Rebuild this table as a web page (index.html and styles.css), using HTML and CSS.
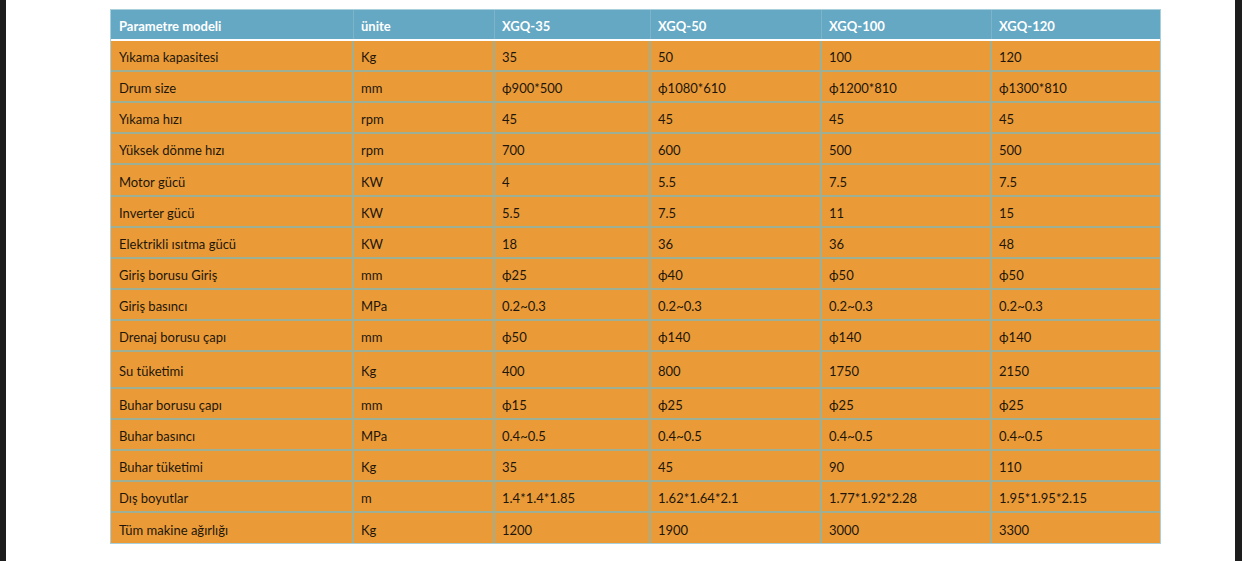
FILE: index.html
```html
<!DOCTYPE html>
<html lang="tr">
<head>
<meta charset="utf-8">
<title>Parametre modeli</title>
<link rel="stylesheet" href="styles.css">
</head>
<body>
<div class="page">
  <div class="tbl">
    <div class="row head"><div class="c">Parametre modeli</div><div class="c">ünite</div><div class="c">XGQ-35</div><div class="c">XGQ-50</div><div class="c">XGQ-100</div><div class="c">XGQ-120</div></div>
    <div class="row"><div class="c">Yıkama kapasitesi</div><div class="c">Kg</div><div class="c">35</div><div class="c">50</div><div class="c">100</div><div class="c">120</div></div>
    <div class="row"><div class="c">Drum size</div><div class="c">mm</div><div class="c">ϕ900*500</div><div class="c">ϕ1080*610</div><div class="c">ϕ1200*810</div><div class="c">ϕ1300*810</div></div>
    <div class="row"><div class="c">Yıkama hızı</div><div class="c">rpm</div><div class="c">45</div><div class="c">45</div><div class="c">45</div><div class="c">45</div></div>
    <div class="row"><div class="c">Yüksek dönme hızı</div><div class="c">rpm</div><div class="c">700</div><div class="c">600</div><div class="c">500</div><div class="c">500</div></div>
    <div class="row wide"><div class="c">Motor gücü</div><div class="c">KW</div><div class="c">4</div><div class="c">5.5</div><div class="c">7.5</div><div class="c">7.5</div></div>
    <div class="row"><div class="c">Inverter gücü</div><div class="c">KW</div><div class="c">5.5</div><div class="c">7.5</div><div class="c">11</div><div class="c">15</div></div>
    <div class="row"><div class="c">Elektrikli ısıtma gücü</div><div class="c">KW</div><div class="c">18</div><div class="c">36</div><div class="c">36</div><div class="c">48</div></div>
    <div class="row"><div class="c">Giriş borusu Giriş</div><div class="c">mm</div><div class="c">ϕ25</div><div class="c">ϕ40</div><div class="c">ϕ50</div><div class="c">ϕ50</div></div>
    <div class="row"><div class="c">Giriş basıncı</div><div class="c">MPa</div><div class="c">0.2~0.3</div><div class="c">0.2~0.3</div><div class="c">0.2~0.3</div><div class="c">0.2~0.3</div></div>
    <div class="row"><div class="c">Drenaj borusu çapı</div><div class="c">mm</div><div class="c">ϕ50</div><div class="c">ϕ140</div><div class="c">ϕ140</div><div class="c">ϕ140</div></div>
    <div class="row tall"><div class="c">Su tüketimi</div><div class="c">Kg</div><div class="c">400</div><div class="c">800</div><div class="c">1750</div><div class="c">2150</div></div>
    <div class="row"><div class="c">Buhar borusu çapı</div><div class="c">mm</div><div class="c">ϕ15</div><div class="c">ϕ25</div><div class="c">ϕ25</div><div class="c">ϕ25</div></div>
    <div class="row"><div class="c">Buhar basıncı</div><div class="c">MPa</div><div class="c">0.4~0.5</div><div class="c">0.4~0.5</div><div class="c">0.4~0.5</div><div class="c">0.4~0.5</div></div>
    <div class="row"><div class="c">Buhar tüketimi</div><div class="c">Kg</div><div class="c">35</div><div class="c">45</div><div class="c">90</div><div class="c">110</div></div>
    <div class="row"><div class="c">Dış boyutlar</div><div class="c">m</div><div class="c">1.4*1.4*1.85</div><div class="c">1.62*1.64*2.1</div><div class="c">1.77*1.92*2.28</div><div class="c">1.95*1.95*2.15</div></div>
    <div class="row last"><div class="c">Tüm makine ağırlığı</div><div class="c">Kg</div><div class="c">1200</div><div class="c">1900</div><div class="c">3000</div><div class="c">3300</div></div>
  </div>
</div>
</body>
</html>
```

FILE: styles.css
```css
html, body {
  margin: 0;
  padding: 0;
  background: #ffffff;
}
body {
  height: 561px;
  overflow: hidden;
  border-left: 6px solid #1d1d1d;
  border-right: 7px solid #1d1d1d;
  box-sizing: border-box;
}
.page {
  padding: 9px 0 0 104px;
}
.tbl {
  width: 1051px;
  box-sizing: border-box;
  border: 1px solid #a9cfdd;
  font-family: Lato, "Liberation Sans", sans-serif;
  font-size: 13px;
  color: #1e160c;
  background: #ea9b38;
}
.row {
  display: grid;
  grid-template-columns: 243px 141px 156px 171px 170px 168px;
  height: 31px;
  box-sizing: border-box;
  border-bottom: 2px solid #9db096;
}
.row.head {
  height: 31px;
  background: #64a8c4;
  color: #ffffff;
  font-weight: 700;
  border-bottom: 2px solid #ffffff;
}
.row.wide {
  height: 32px;
}
.row.tall {
  height: 37px;
}
.row.last {
  height: 30px;
  border-bottom: none;
}
.c {
  display: flex;
  align-items: center;
  padding: 3px 0 0 7px;
  border-right: 2px solid #9db096;
  white-space: nowrap;
}
.c:first-child {
  padding-left: 8px;
}
.c:last-child {
  border-right: none;
}
.head .c {
  padding-top: 2px;
  border-right: 1px solid #7db4ca;
}
.head .c:last-child {
  border-right: none;
}
```
